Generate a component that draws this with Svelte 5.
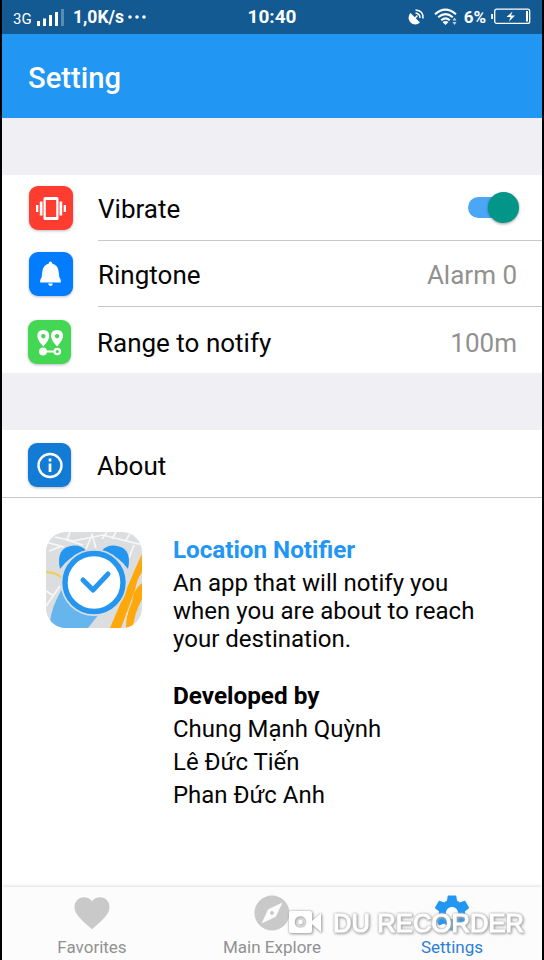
<script>
  let vibrate = $state(true);
  const developers = ['Chung Mạnh Quỳnh', 'Lê Đức Tiến', 'Phan Đức Anh'];
</script>

<div class="screen">
  <div class="status">
    <div class="side left">
      <span class="net">3G</span>
      <svg class="signal" width="28" height="18" viewBox="0 0 28 18" fill="#fff">
        <path d="M0 13h3v5H0zM6 10.500h3V18H6zM12 7h3v11h-3zM18 4h3v14h-3z" />
        <path d="M24 1h3v17h-3z" opacity=".3" />
      </svg>
      <b class="speed">1,0K/s</b>
      <svg class="dots" width="18" height="4" viewBox="0 0 18 4" fill="#fff"><circle cx="2" cy="2" r="1.800" /><circle cx="9" cy="2" r="1.800" /><circle cx="16" cy="2" r="1.800" /></svg>
    </div>
    <b class="clock">10:40</b>
    <div class="side right">
      <svg width="17" height="18" viewBox="0 0 17 18" fill="none" stroke="#fff" stroke-width="1.500">
        <path d="M2.500 5A6.300 6.300 0 1 0 12 14.500Z" fill="#fff" stroke="none" /><path d="M7 10l2.500-2.500M7.500 5Q12 5.500 12 10M7.500 2Q15.500 2.500 15 10.500" />
      </svg>
      <svg class="wifi" width="24" height="18" viewBox="0 0 24 18" fill="none" stroke="#fff" stroke-width="2">
        <path d="M1 6.200Q11.500-3 22 6.200M4.200 9.300Q11.500 3 18.800 9.300M7.200 12.200Q11.500 8.500 15.800 12.200" /><path d="M11.500 17l-3-3q3-2 6 0z" fill="#fff" stroke="none" /><path d="M20.500 9.500l2 3h-4zM20.500 17l2-3h-4z" fill="#fff" opacity=".75" stroke="none" />
      </svg>
      <b class="pct">6%</b>
      <svg class="battery" width="40" height="17" viewBox="0 0 40 17" fill="none" stroke="#fff" stroke-width="1.300">
        <rect x="3.700" y="1.200" width="35" height="14.200" rx="2" /><path d="M.2 6h1.800v5H.2zM35 3h2v10.600h-2zM21.500 3.500l-6 5.500h4l-1.500 4.500 6-6h-4z" fill="#fff" stroke="none" />
      </svg>
    </div>
  </div>

  <header>Setting</header>
  <div class="gap"></div>

  <div class="row">
    <div class="tile red">
      <svg width="44" height="44" viewBox="0 0 44 44" fill="#fff">
        <path fill-rule="evenodd" d="M16 11h12q1.500 0 1.500 1.500v20q0 1.500-1.500 1.500H16q-1.500 0-1.500-1.500v-20q0-1.500 1.500-1.500zm.8 3v17h10.400v-17z" /><path d="M10.800 15.500h2.700v14h-2.700zM30.500 15.500h2.700v14h-2.700zM7 19h2.300v7H7zM34.700 19H37v7h-2.300z" />
      </svg>
    </div>
    <div class="cell">
      <span class="label">Vibrate</span>
      <button class="switch" class:off={!vibrate} aria-label="Vibrate" onclick={() => (vibrate = !vibrate)}><i></i></button>
    </div>
  </div>
  <div class="row">
    <div class="tile blue">
      <svg width="44" height="44" viewBox="0 0 44 44" fill="#fff">
        <path d="M21.500 9.500q1.600 0 1.700 2 6.100 1.500 6.600 9 0 5 2 7.500V30.500H11.200v-2.500q2-2.500 2-7.500.5-7.500 6.600-9 .1-2 1.700-2zM19.200 31.500h4.600q-.2 2.400-2.300 2.400t-2.300-2.400z" />
      </svg>
    </div>
    <div class="cell"><span class="label">Ringtone</span><span class="value">Alarm 0</span></div>
  </div>
  <div class="row last">
    <div class="tile green">
      <svg width="44" height="44" viewBox="0 0 44 44" fill="#fff">
        <path fill-rule="evenodd" d="M15.300 10q6 0 6 6 0 4-6 10.500-6-6.500-6-10.500 0-6 6-6zm0 4a2.200 2.200 0 1 0 .01 0zM29 10q6 0 6 6 0 4-6 10.500-6-6.500-6-10.500 0-6 6-6zm0 4a2.200 2.200 0 1 0 .01 0z" />
        <circle cx="15" cy="31.500" r="3.900" /><path d="M15 30.500h12v2H15z" /><circle cx="29.300" cy="31.500" r="2.700" fill="none" stroke="#fff" stroke-width="2.200" />
      </svg>
    </div>
    <div class="cell"><span class="label">Range to notify</span><span class="value">100m</span></div>
  </div>

  <div class="gap"></div>

  <div class="row about">
    <div class="tile navy">
      <svg width="44" height="44" viewBox="0 0 44 44" fill="none" stroke="#fff">
        <circle cx="22" cy="22.500" r="11.500" stroke-width="2.400" /><path d="M22 20.500v8.500M22 15.500v3" stroke-width="2.700" />
      </svg>
    </div>
    <div class="cell"><span class="label">About</span></div>
  </div>

  <section>
    <svg class="logo" width="96" height="96" viewBox="0 0 96 96">
      <defs><clipPath id="appTile"><rect width="96" height="96" rx="20" /></clipPath></defs>
      <g clip-path="url(#appTile)" fill="none">
        <path d="M0 0h96v96H0z" fill="#dcdddf" />
        <path d="M0 10l18 5M3 19l13-5M9 5l18 4M24 0l-3 8 16 5M40 17l6-14 4 13M27 9l30-6 39 10M61 0l-5 7M70 0l-4 7M80 8l5-8M14 54L0 74M0 59l8 5M88 13l-5 13M80 80l8 12" stroke="#f8f8f8" stroke-width="1.700" />
        <path d="M16 57Q6 74 4 89v7h38l11-14z" fill="#66b5ed" />
        <path d="M0 40l8 1 9 5" stroke="#efcf5b" stroke-width="2.300" />
        <path d="M79 59l13 2" stroke="#efcf5b" stroke-width="2.300" />
        <path d="M96 22Q92 30 87 42L64 96h11l14-38q2-11 7-18z" fill="#ffa80c" />
        <path d="M96 51Q87 58 86 70 80 82 80 96h7q1-14 9-29z" fill="#ffa80c" />
        <path d="M14 37Q9 15 28 13.500q9 0 12 5.500Q22 25 14 37zM82 37q5-22-14-23.500-9 0-12 5.500 18 6 26 18z" fill="#2596f0" />
        <circle cx="48" cy="50.500" r="33.500" fill="#dcdddf" /><circle cx="48" cy="50.500" r="29" fill="#fff" stroke="#2596f0" stroke-width="5.400" />
        <path d="M37 48l10 10 15-16" stroke="#2596f0" stroke-width="5" stroke-linecap="round" stroke-linejoin="round" />
      </g>
    </svg>
    <div class="info">
      <h2>Location Notifier</h2>
      <p>An app that will notify you<br />when you are about to reach<br />your destination.</p>
      <h3>Developed by</h3>
      {#each developers as name}<div class="dev"><span>{name}</span></div>{/each}
    </div>
  </section>

  <nav>
    <div class="tab">
      <svg width="42" height="42" viewBox="0 0 24 24" fill="#c9c9c9"><path d="M12 21.350l-1.450-1.320C5.400 15.360 2 12.280 2 8.500 2 5.420 4.420 3 7.500 3c1.740 0 3.410.81 4.500 2.090C13.090 3.810 14.760 3 16.500 3 19.580 3 22 5.420 22 8.500c0 3.780-3.400 6.860-8.550 11.540z" /></svg>
      <span>Favorites</span>
    </div>
    <div class="tab">
      <svg width="42" height="42" viewBox="0 0 24 24" fill="#c9c9c9"><path d="M12 10.900c-.61 0-1.100.49-1.100 1.100s.49 1.100 1.100 1.100 1.100-.49 1.100-1.100-.49-1.100-1.100-1.100zM12 2C6.480 2 2 6.480 2 12s4.480 10 10 10 10-4.480 10-10S17.520 2 12 2zm2.190 12.190L6 18l3.810-8.190L18 6z" /></svg>
      <span>Main Explore</span>
    </div>
    <div class="tab active">
      <svg width="42" height="42" viewBox="0 0 24 24" fill="#2196f3"><path d="M19.430 12.980c.04-.32.07-.64.07-.98s-.03-.66-.07-.98l2.110-1.650c.19-.15.24-.42.12-.64l-2-3.460c-.12-.22-.39-.3-.61-.22l-2.490 1c-.52-.4-1.080-.73-1.690-.98l-.38-2.650C14.460 2.180 14.250 2 14 2h-4c-.25 0-.46.18-.49.42l-.38 2.650c-.61.25-1.170.59-1.690.98l-2.490-1c-.23-.09-.49 0-.61.22l-2 3.460c-.13.22-.07.49.12.64l2.110 1.650c-.04.32-.07.65-.07.98s.03.66.07.98l-2.110 1.650c-.19.15-.24.42-.12.64l2 3.460c.12.22.39.3.61.22l2.490-1c.52.4 1.080.73 1.690.98l.38 2.650c.03.24.24.42.49.42h4c.25 0 .46-.18.49-.42l.38-2.650c.61-.25 1.170-.59 1.690-.98l2.490 1c.23.09.49 0 .61-.22l2-3.460c.12-.22.07-.49-.12-.64zM12 15.500c-1.930 0-3.500-1.570-3.500-3.500s1.570-3.500 3.500-3.500 3.500 1.570 3.500 3.500-1.570 3.500-3.500 3.500z" /></svg>
      <span>Settings</span>
    </div>
  </nav>

  <div class="watermark">
    <svg width="36" height="26" viewBox="0 0 36 26" fill="#fff"><path fill-rule="evenodd" d="M4 2h19q2 0 2 2v18q0 2-2 2H4q-2 0-2-2V4q0-2 2-2zm9.500 5.200a5.800 5.800 0 1 0 .01 0zm0 3.500a2.300 2.300 0 1 1-.01 0zM25 12l9-8v19l-9-8z" /></svg>
    <svg class="mark" width="240" height="30" viewBox="0 0 240 30"><text x="3" y="23" textLength="191" lengthAdjust="spacing">DU RECORDER</text></svg>
  </div>
</div>

<style>
  :global(body) { background: #000; }
  .screen { position: relative; box-sizing: border-box; width: 544px; height: 960px; overflow: hidden; display: flex; flex-direction: column; background: #fff; border: solid #000; border-width: 0 2px; font-family: Roboto, "Noto Sans", sans-serif; color: #050505; }
  .status { height: 34px; flex: none; box-sizing: border-box; background: #135992; color: #fff; display: grid; grid-template: 34px / 1fr auto 1fr; align-items: center; font-size: 18px; line-height: 20px; }
  .side { display: flex; align-items: center; }
  .left { padding-left: 11px; }
  .right { justify-content: flex-end; padding-right: 11px; }
  .net { font-size: 15px; padding-top: 4px; width: 24px; }
  .signal { margin-top: 0; }
  .speed { font-size: 17.5px; margin-left: 8px; width: 51px; }
  .dots { margin: 0 0 1px 4px; }
  .clock { font-size: 19px; }
  .right .wifi { margin-left: 9px; }
  .pct { font-size: 17px; margin: 0 5px 0 6px; }
  .battery { margin-top: -1px; }
  header { height: 84px; flex: none; box-sizing: border-box; background: #2196f3; color: #fff; padding: 3px 0 0 26px; font-size: 29.2px; font-weight: 500; line-height: 83px; }
  .gap { height: 57px; flex: none; background: #efeff4; }
  .row { height: 66px; flex: none; display: flex; align-items: center; padding-left: 27px; box-sizing: border-box; }
  .row.last { padding-left: 26px; }
  .row.about { height: 68px; padding: 1px 0 0 26px; border-bottom: 1px solid #c8c7cc; }
  .tile { width: 44px; height: 44px; border-radius: 9px; box-shadow: 0 1px 3px #0004; flex: none; }
  .last .tile, .about .tile { width: 43px; margin-right: 1px; }
  .last .tile { margin-top: 3px; }
  .about .tile { margin-top: 1px; }
  .tile svg { display: block; }
  .red { background: #fe3c30; }
  .blue { background: #047cff; }
  .green { background: #44d754; }
  .navy { background: #127bd5; }
  .cell { flex: 1; height: 100%; box-sizing: border-box; margin-left: 25px; padding-right: 25px; border-bottom: 1px solid #c8c7cc; display: flex; align-items: center; justify-content: space-between; font-size: 26px; padding-top: 3px; }
  .last .cell { border: 0; padding-top: 5px; }
  .about .cell { border: 0; padding-top: 3px; }
  .value { color: #919191; }
  .switch { position: relative; width: 51px; height: 32px; margin: -4px -2px 0 0; padding: 0; border: 0; background: none; display: flex; align-items: center; justify-content: flex-end; }
  .switch::before { content: ""; position: absolute; left: 0; top: 6px; width: 44px; height: 21px; border-radius: 11px; background: #4ba7f5; }
  .switch.off { justify-content: flex-start; }
  .switch i { position: relative; width: 31px; height: 31px; border-radius: 50%; background: #039587; box-shadow: 0 1px 3px #0006; }
  section { flex: 1; display: flex; padding: 34px 0 0 44px; }
  .logo { flex: none; margin-right: 31px; }
  h2, h3, p { margin: 0; }
  .info { font-size: 24px; }
  h2 { font-size: 24.2px; line-height: 28px; color: #2196f3; padding-top: 4px; }
  p { line-height: 28px; margin-top: 5px; font-size: 24.05px; }
  h3 { font-size: 24.3px; line-height: 28px; margin-top: 29px; margin-bottom: 3px; color: #000; }
  .dev { line-height: 33px; height: 33px; font-size: 23.95px; }
  nav { height: 73px; flex: none; background: #fcfcfc; box-shadow: 0 -1px 3px #0002; display: grid; grid-template-columns: repeat(3, 1fr); color: #919191; font-size: 17px; }
  .tab { display: flex; flex-direction: column; align-items: center; }
  .tab svg { margin-top: 5px; flex: none; }
  .tab span { line-height: 20px; margin-top: 3px; }
  .active { color: #2c7fd4; }
  .watermark { position: absolute; left: 285px; top: 909px; display: flex; filter: drop-shadow(0 0 1px #aaa) drop-shadow(1px 1px 1px #aaa); }
  .mark { margin-left: 7px; }
  .mark text { fill: #fff; stroke: #fff; stroke-width: 1.2px; font: 25.5px "Liberation Sans", sans-serif; }
</style>
